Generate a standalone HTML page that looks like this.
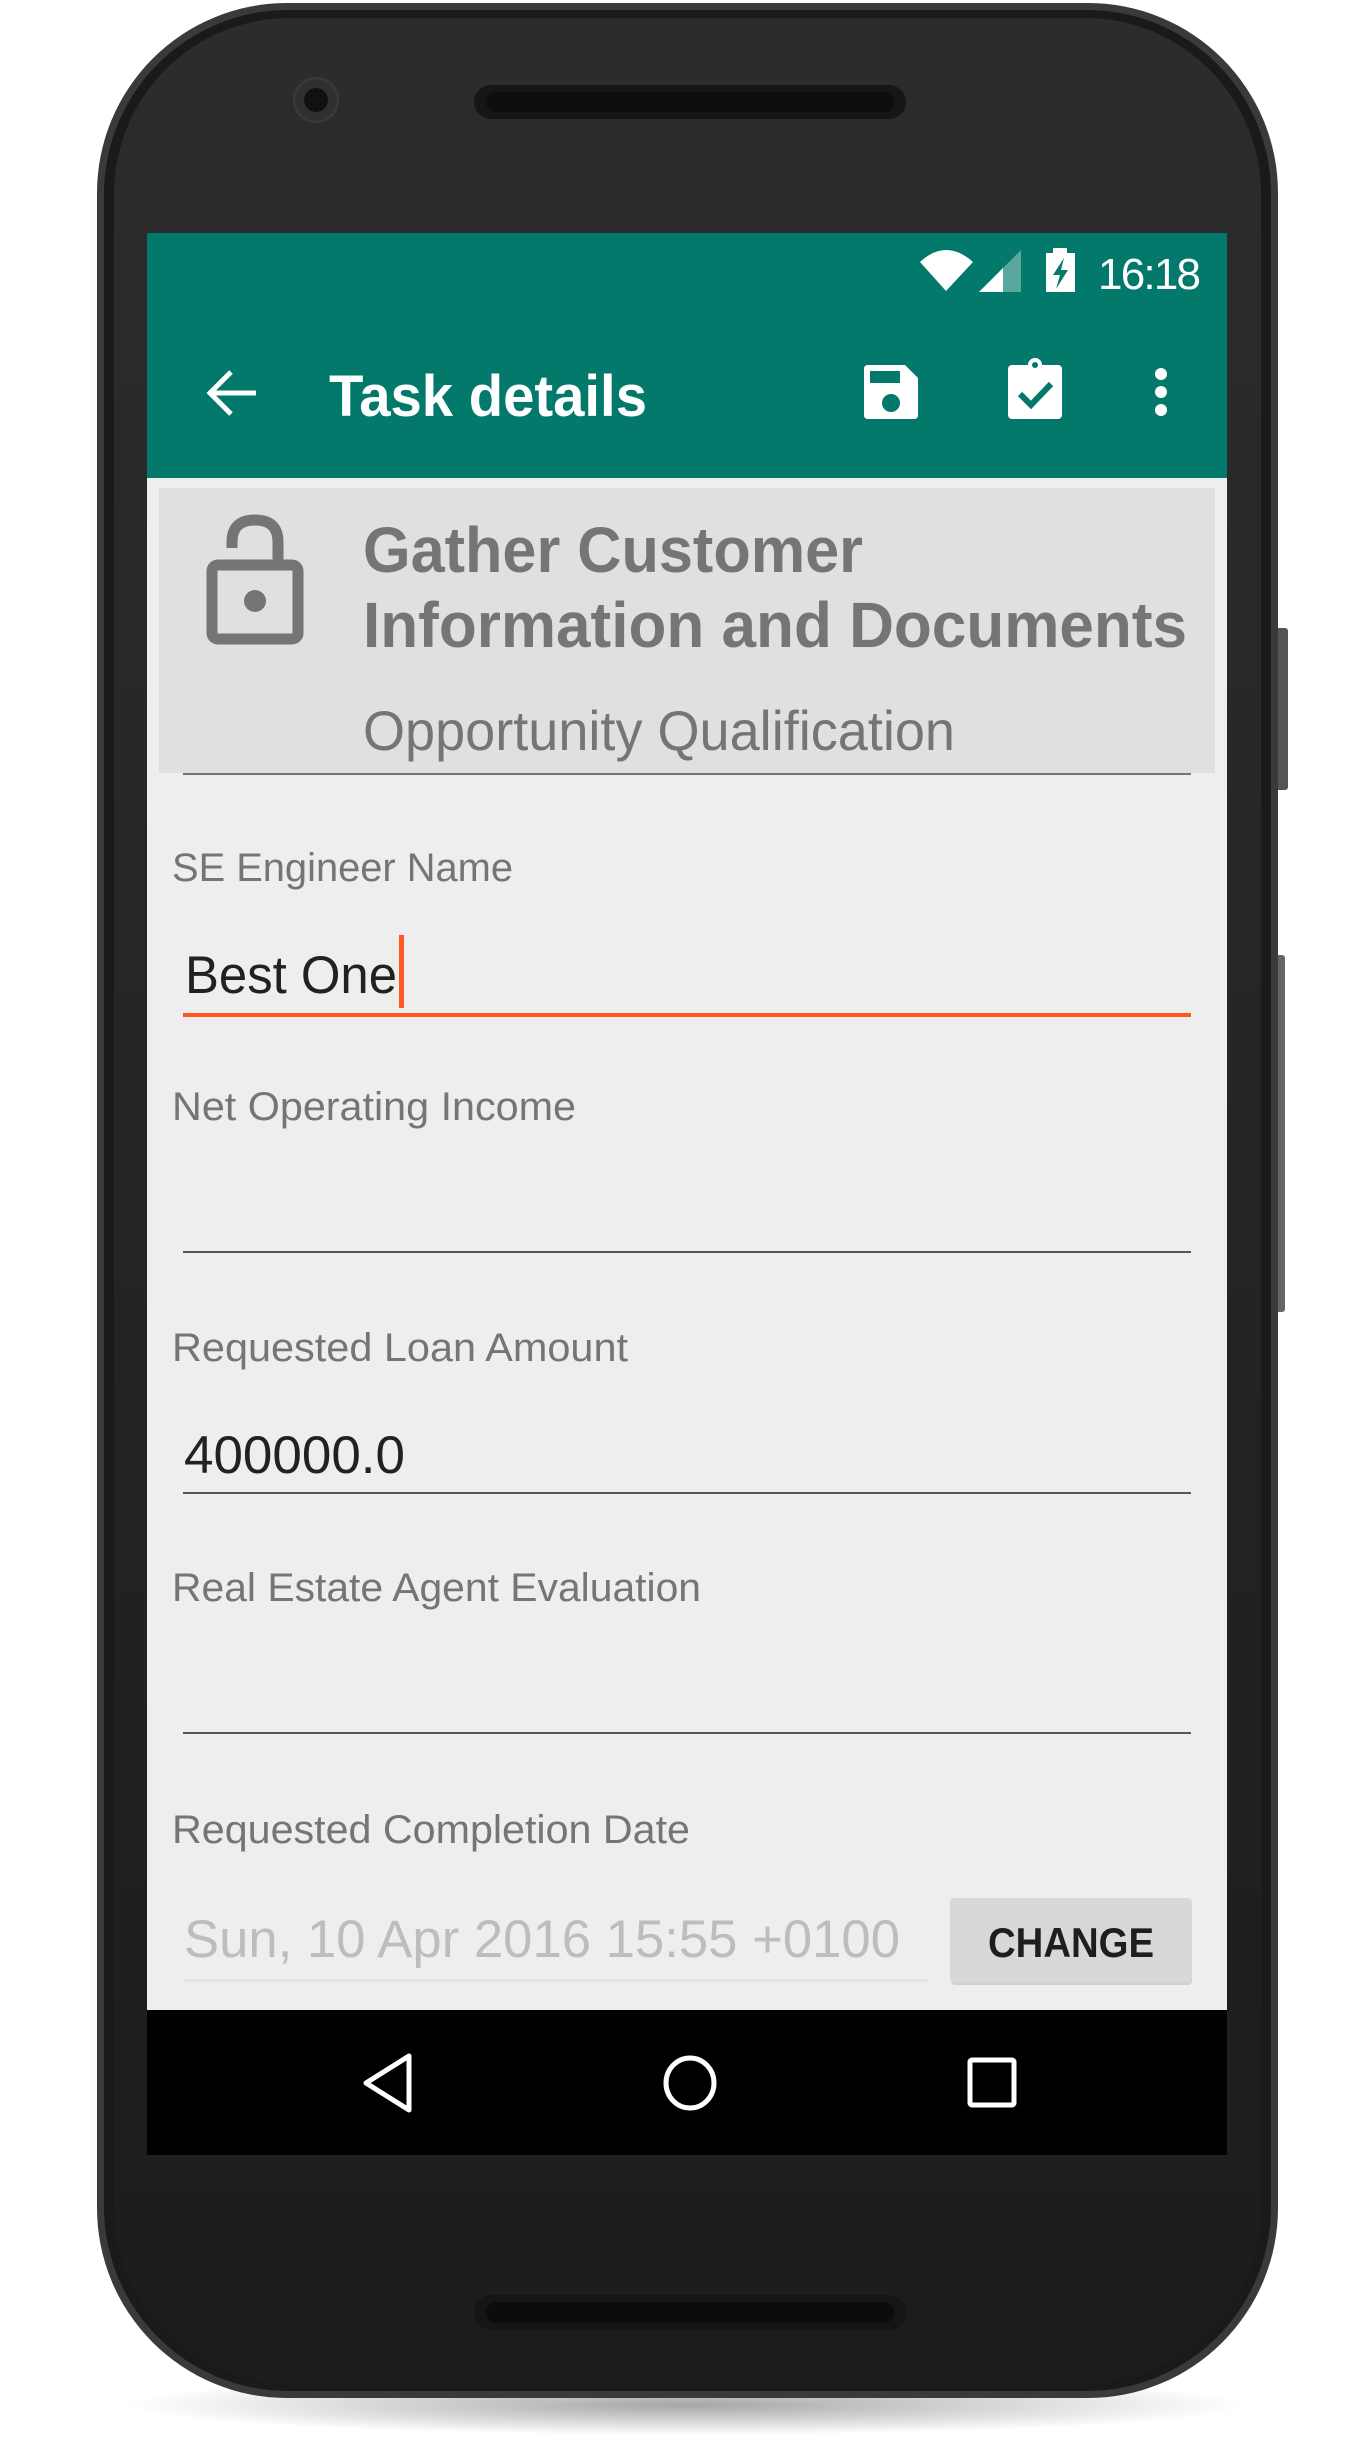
<!DOCTYPE html>
<html><head><meta charset="utf-8"><style>
html,body{margin:0;padding:0;background:#fff;}
svg{display:block;}
text{font-family:"Liberation Sans",sans-serif;}
</style></head><body>
<svg width="1370" height="2446" viewBox="0 0 1370 2446" xmlns="http://www.w3.org/2000/svg">
<defs>
<radialGradient id="sh" cx="0.5" cy="0.5" r="0.5"><stop offset="0" stop-color="#000" stop-opacity="0.35"/><stop offset="1" stop-color="#000" stop-opacity="0"/></radialGradient>
<linearGradient id="face" x1="0" y1="0" x2="0" y2="1"><stop offset="0" stop-color="#2c2c2c"/><stop offset="1" stop-color="#1c1c1c"/></linearGradient>
</defs>
<ellipse cx="686" cy="2405" rx="560" ry="30" fill="url(#sh)"/>
<rect x="1272" y="628" width="16" height="162" rx="3" fill="#555"/>
<rect x="1272" y="955" width="13" height="357" rx="3" fill="#666"/>
<rect x="97" y="3" width="1181" height="2395" rx="190" fill="#3a3a3a"/>
<rect x="104" y="10" width="1167" height="2381" rx="184" fill="#1a1a1a"/>
<rect x="114" y="18" width="1147" height="2365" rx="176" fill="url(#face)"/>
<circle cx="316" cy="100" r="22" fill="#303030" stroke="#3a3a3a" stroke-width="2"/>
<circle cx="316" cy="100" r="12" fill="#111"/>
<rect x="474" y="85" width="432" height="34" rx="17" fill="#161616"/>
<rect x="486" y="92" width="408" height="20" rx="10" fill="#0e0e0e"/>
<rect x="474" y="2295" width="432" height="35" rx="17" fill="#151515"/>
<rect x="486" y="2302" width="408" height="21" rx="10" fill="#0c0c0c"/>
<rect x="147" y="233" width="1080" height="1777" fill="#eeeeee"/>
<rect x="147" y="233" width="1080" height="245" fill="#02796b"/>
<path d="M920 262 Q946 238 973 262 L946 291 Z" fill="#fff"/>
<path d="M979 292 L1021 250 L1021 292 Z" fill="#fff" fill-opacity="0.35"/>
<path d="M979 292 L1003 268 L1003 292 Z" fill="#fff"/>
<rect x="1053" y="248" width="14" height="6" fill="#fff"/>
<rect x="1046" y="253" width="29" height="39" fill="#fff"/>
<path d="M1064 258 L1053 275 L1060 275 L1056 289 L1068 270 L1061 270 Z" fill="#02796b"/>
<text x="1098" y="289" font-size="44" fill="#fff" textLength="103">16:18</text>
<path d="M256 393 H212 M231 372 L210 393 L231 414" stroke="#fff" stroke-width="5" fill="none"/>
<text x="329" y="416" font-size="58" font-weight="bold" fill="#fff" textLength="318" lengthAdjust="spacingAndGlyphs">Task details</text>
<path d="M868 365 H905 L918 378 V415 Q918 419 914 419 H868 Q864 419 864 415 V369 Q864 365 868 365 Z" fill="#fff"/>
<rect x="870" y="371" width="30" height="12" fill="#02796b"/>
<circle cx="891" cy="403" r="9" fill="#02796b"/>
<rect x="1008" y="365" width="54" height="54" rx="4" fill="#fff"/>
<circle cx="1035" cy="365" r="7" fill="#fff"/>
<circle cx="1035" cy="365" r="3" fill="#02796b"/>
<path d="M1020 394 L1031 405 L1051 384" stroke="#02796b" stroke-width="6" fill="none"/>
<circle cx="1161" cy="374" r="6" fill="#fff"/><circle cx="1161" cy="392" r="6" fill="#fff"/><circle cx="1161" cy="410" r="6" fill="#fff"/>
<rect x="159" y="488" width="1056" height="285" fill="#e0e0e0"/>
<path d="M232 548 V542 Q232 520 255 520 Q278 520 278 542 V563" stroke="#757575" stroke-width="11" fill="none"/>
<rect x="212" y="565" width="86" height="74" rx="6" stroke="#757575" stroke-width="11" fill="none"/>
<circle cx="255" cy="601" r="11" fill="#757575"/>
<text x="363" y="572" font-size="64" font-weight="bold" fill="#757575" textLength="500" lengthAdjust="spacingAndGlyphs">Gather Customer</text>
<text x="363" y="647" font-size="64" font-weight="bold" fill="#757575" textLength="824" lengthAdjust="spacingAndGlyphs">Information and Documents</text>
<text x="363" y="750" font-size="56" fill="#757575" textLength="592" lengthAdjust="spacingAndGlyphs">Opportunity Qualification</text>
<rect x="183" y="773" width="1008" height="2" fill="#757575"/>
<g fill="#757575" font-size="40">
<text x="172" y="881" textLength="341" lengthAdjust="spacingAndGlyphs">SE Engineer Name</text>
<text x="172" y="1120" textLength="404" lengthAdjust="spacingAndGlyphs">Net Operating Income</text>
<text x="172" y="1361" textLength="456" lengthAdjust="spacingAndGlyphs">Requested Loan Amount</text>
<text x="172" y="1601" textLength="529" lengthAdjust="spacingAndGlyphs">Real Estate Agent Evaluation</text>
<text x="172" y="1843" textLength="518" lengthAdjust="spacingAndGlyphs">Requested Completion Date</text>
</g>
<text x="185" y="993" font-size="53" fill="#212121" textLength="212" lengthAdjust="spacingAndGlyphs">Best One</text>
<rect x="399" y="935" width="5" height="73" fill="#ff5722"/>
<rect x="183" y="1013" width="1008" height="4" fill="#ff5722"/>
<rect x="183" y="1251" width="1008" height="2" fill="#555"/>
<text x="184" y="1473" font-size="53" fill="#212121" textLength="221" lengthAdjust="spacingAndGlyphs">400000.0</text>
<rect x="183" y="1492" width="1008" height="2" fill="#555"/>
<rect x="183" y="1732" width="1008" height="2" fill="#555"/>
<text x="184" y="1957" font-size="53" fill="#bdbdbd" textLength="716" lengthAdjust="spacingAndGlyphs">Sun, 10 Apr 2016 15:55 +0100</text>
<rect x="183" y="1979" width="744" height="3" fill="#e3e3e3"/>
<rect x="951" y="1901" width="241" height="84" rx="4" fill="#000" fill-opacity="0.12"/>
<rect x="950" y="1898" width="242" height="84" rx="4" fill="#d7d8d8"/>
<text x="988" y="1957" font-size="42" font-weight="bold" fill="#1e1e1e" textLength="166" lengthAdjust="spacingAndGlyphs">CHANGE</text>
<rect x="147" y="2010" width="1080" height="145" fill="#000"/>
<path d="M409 2056 L366 2083 L409 2110 Z" stroke="#fff" stroke-width="5" fill="none" stroke-linejoin="round"/>
<ellipse cx="690" cy="2083" rx="24" ry="25" stroke="#fff" stroke-width="5" fill="none"/>
<rect x="970" y="2060" width="44" height="45" rx="2" stroke="#fff" stroke-width="5" fill="none"/>
</svg>
</body></html>
